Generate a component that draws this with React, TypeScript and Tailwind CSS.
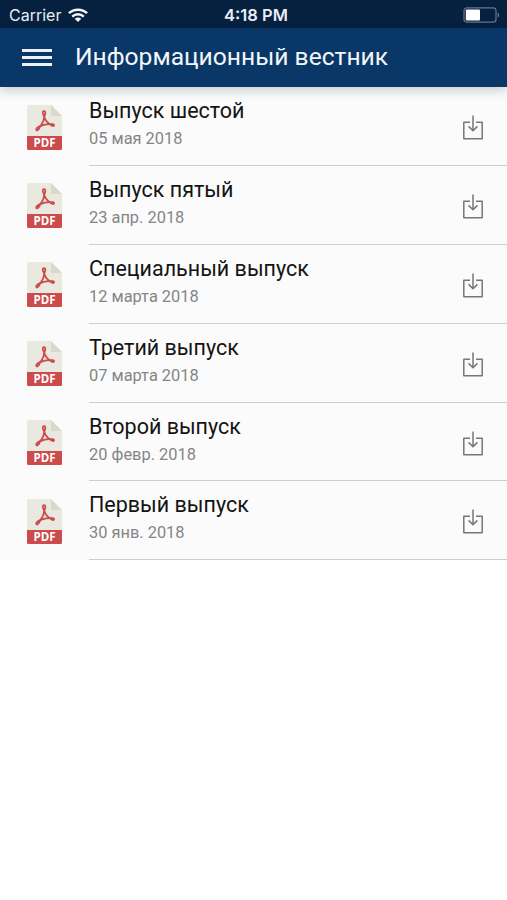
type Issue = {
  title: string;
  date: string;
};

const ISSUES: Issue[] = [
  { title: "Выпуск шестой", date: "05 мая 2018" },
  { title: "Выпуск пятый", date: "23 апр. 2018" },
  { title: "Специальный выпуск", date: "12 марта 2018" },
  { title: "Третий выпуск", date: "07 марта 2018" },
  { title: "Второй выпуск", date: "20 февр. 2018" },
  { title: "Первый выпуск", date: "30 янв. 2018" },
];

function WifiIcon() {
  return (
    <svg width="20" height="14" viewBox="0 0 20 14" fill="none" stroke="#f4f6fa" strokeWidth="2.5">
      <path d="M.9 5.2C6 .5 14 .5 19.1 5.2" />
      <path d="M4.2 8.6c3.3-3.1 8.3-3.1 11.6 0" />
      <path d="M10 14 6.7 10.8c1.9-1.7 4.7-1.7 6.6 0Z" fill="#f4f6fa" stroke="none" />
    </svg>
  );
}

function BatteryIcon() {
  return (
    <svg width="37" height="16" viewBox="0 0 37 16" fill="none">
      <rect x="1" y=".8" width="32" height="14.4" rx="3" stroke="#66748a" strokeWidth="1.2" />
      <rect x="2.8" y="2.6" width="14.2" height="10.8" rx="1" fill="#fff" />
      <path d="M34.6 5.4c2 .8 2 4.4 0 5.2Z" fill="#66748a" />
    </svg>
  );
}

function PdfIcon() {
  return (
    <svg className="shrink-0" width="35" height="45" viewBox="0 0 35 45">
      <path d="M1.5 0H24l11 11v20H0V1.5Q0 0 1.5 0Z" fill="#e9e9e0" />
      <path d="M24 0v11h11Z" fill="#d9d8ca" />
      <g fill="none" stroke="#cc4b4c" strokeWidth="1.8" strokeLinejoin="round">
        <path d="M17.2 11.2c-1.7-2.3-1.9-5.1-.2-5.100s1.900 2.600.2 5.100Z" />
        <path d="M17.200 11.200c.1 3.400-1.800 7.200-4 10 2.800-1.200 6.200-2.100 9.500-2-2.600-1.800-5-4.800-5.500-8Z" />
        <path d="M13.200 21.200c-3 1.100-4.600 2.800-3.800 3.900.9 1 2.800-.9 3.800-3.900Z" />
        <path d="M22.700 19.200c2.500-.4 4.500 0 4.400 1.200-.2 1.300-2.600.5-4.400-1.200Z" />
      </g>
      <path d="M0 31h35v12.5q0 1.5-1.500 1.500h-32Q0 45 0 43.5Z" fill="#cc4b4c" />
      <text
        x="17.5"
        y="42.3"
        textAnchor="middle"
        textLength="22"
        lengthAdjust="spacingAndGlyphs"
        fill="#fff"
        fontSize="12"
        fontWeight="700"
        fontFamily="'Open Sans', sans-serif"
      >
        PDF
      </text>
    </svg>
  );
}

function DownloadIcon() {
  return (
    <svg width="20" height="25" viewBox="0 0 20 25" fill="none" stroke="#777" strokeWidth="1.5">
      <path d="M7 7.2H.8v16.6h18.4V7.200H13" strokeLinejoin="round" />
      <path d="M10 .5v15.200M5.600 11.400l4.400 4.400 4.400-4.400" />
    </svg>
  );
}

function StatusBar() {
  return (
    <div className="grid h-7 grid-cols-3 items-center bg-[#06203f] pr-[7px] pl-[9px] font-['Inter',sans-serif] text-[#e9edf3]">
      <div className="flex items-center gap-[7px] pt-0.5">
        <span className="text-[16px] leading-5">Carrier</span>
        <WifiIcon />
      </div>
      <span className="pt-0.5 pl-[3px] text-center text-[16.5px] leading-5 font-semibold">4:18 PM</span>
      <div className="flex justify-end pt-0.5">
        <BatteryIcon />
      </div>
    </div>
  );
}

function IssueRow({ issue }: { issue: Issue }) {
  return (
    <li className="flex h-[78.9px] pl-[27px]">
      <div className="w-[62px] shrink-0 pt-[17.5px]">
        <PdfIcon />
      </div>
      <div className="flex flex-1 justify-between border-b border-[#cfcfcf] pr-6">
        <div className="pt-[10px]">
          <h2 className="text-[21.5px] leading-7 text-[#141414]">{issue.title}</h2>
          <p className="mt-[2px] text-[16.4px] leading-6 text-[#858585]">{issue.date}</p>
        </div>
        <button type="button" aria-label="Скачать" className="self-start pt-[28px]">
          <DownloadIcon />
        </button>
      </div>
    </li>
  );
}

export default function App() {
  return (
    <div className="min-h-screen bg-white font-['Roboto',sans-serif]">
      <StatusBar />
      <header className="relative flex h-[59px] items-center bg-[#093868] pl-[22px] shadow-[0_4px_10px_rgba(9,40,80,0.2)]">
        <button type="button" aria-label="Меню" className="flex w-[30px] flex-col gap-[4px]">
          <span className="h-[3px] bg-[#eef2f7]" />
          <span className="h-[3px] bg-[#eef2f7]" />
          <span className="h-[3px] bg-[#eef2f7]" />
        </button>
        <h1 className="-mt-px ml-[23px] text-[24.6px] leading-8 text-[#f3f6fa]">Информационный вестник</h1>
      </header>
      <ul className="bg-[#fbfbfb]">
        {ISSUES.map((issue) => (
          <IssueRow key={issue.title} issue={issue} />
        ))}
      </ul>
    </div>
  );
}
